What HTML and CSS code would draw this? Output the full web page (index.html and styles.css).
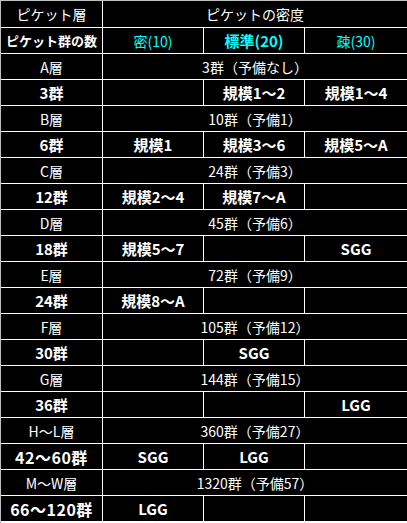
FILE: index.html
```html
<!DOCTYPE html>
<html lang="ja">
<head>
<meta charset="utf-8">
<link rel="stylesheet" href="styles.css">
</head>
<body>
<div class="table">
  <div class="c first">ピケット層</div><div class="c span3 first">ピケットの密度</div>
  <div class="c b narrow">ピケット群の数</div><div class="c cyan">密(10)</div><div class="c cyan b">標準(20)</div><div class="c cyan">疎(30)</div>

  <div class="c">A層</div><div class="c span3">3群（予備なし）</div>
  <div class="c b">3群</div><div class="c"></div><div class="c b">規模1～2</div><div class="c b">規模1～4</div>

  <div class="c">B層</div><div class="c span3">10群（予備1）</div>
  <div class="c b">6群</div><div class="c b">規模1</div><div class="c b">規模3～6</div><div class="c b">規模5～A</div>

  <div class="c">C層</div><div class="c span3">24群（予備3）</div>
  <div class="c b">12群</div><div class="c b">規模2～4</div><div class="c b">規模7～A</div><div class="c"></div>

  <div class="c">D層</div><div class="c span3">45群（予備6）</div>
  <div class="c b">18群</div><div class="c b">規模5～7</div><div class="c"></div><div class="c b">SGG</div>

  <div class="c">E層</div><div class="c span3">72群（予備9）</div>
  <div class="c b">24群</div><div class="c b">規模8～A</div><div class="c"></div><div class="c"></div>

  <div class="c">F層</div><div class="c span3">105群（予備12）</div>
  <div class="c b">30群</div><div class="c"></div><div class="c b">SGG</div><div class="c"></div>

  <div class="c">G層</div><div class="c span3">144群（予備15）</div>
  <div class="c b">36群</div><div class="c"></div><div class="c"></div><div class="c b">LGG</div>

  <div class="c">H～L層</div><div class="c span3">360群（予備27）</div>
  <div class="c b wide">42～60群</div><div class="c b">SGG</div><div class="c b">LGG</div><div class="c"></div>

  <div class="c">M～W層</div><div class="c span3">1320群（予備57）</div>
  <div class="c b wide">66～120群</div><div class="c b">LGG</div><div class="c"></div><div class="c"></div>
</div>
</body>
</html>
```
FILE: styles.css
```css
html, body {
  margin: 0;
  padding: 0;
  background: #ffffff;
}
.table {
  width: 407px;
  height: 523px;
  box-sizing: border-box;
  display: grid;
  grid-template-columns: 101px 100px 100px 102px;
  grid-auto-rows: 25px;
  grid-template-rows: 26px;
  gap: 1px;
  background: #ffffff;
  border-top: 1px solid #c0c0c0;
  border-left: 1px solid #c0c0c0;
  font-family: "Noto Sans CJK JP", "DejaVu Sans", sans-serif;
  font-size: 14px;
  color: #ffffff;
}
.c {
  background: #000000;
  display: flex;
  align-items: center;
  justify-content: center;
  white-space: nowrap;
  overflow: hidden;
  line-height: 1;
}
.span3 {
  grid-column: span 3;
}
.b {
  font-weight: bold;
  font-size: 15px;
}
.narrow {
  font-size: 13px;
}
.wide {
  font-size: 16px;
  letter-spacing: 0.5px;
}
.cyan {
  color: #00ffff;
}
```
